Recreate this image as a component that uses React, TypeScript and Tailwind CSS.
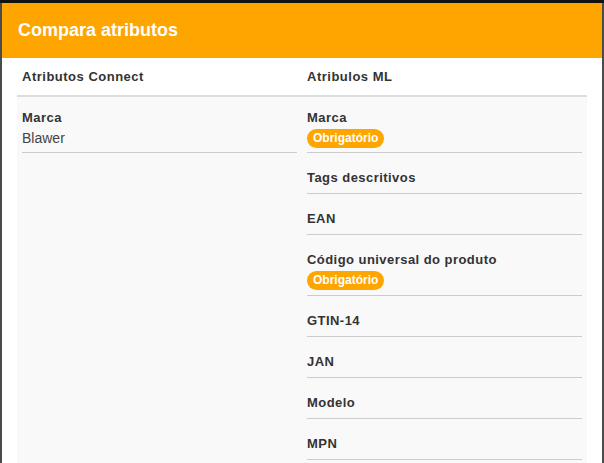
import React from 'react';

type MlAttr = { name: string; required?: boolean };

const mlAttrs: MlAttr[] = [
  { name: 'Marca', required: true },
  { name: 'Tags descritivos' },
  { name: 'EAN' },
  { name: 'Código universal do produto', required: true },
  { name: 'GTIN-14' },
  { name: 'JAN' },
  { name: 'Modelo' },
  { name: 'MPN' },
];

const Badge = () => (
  <span className="inline-block rounded-full bg-[#ffa500] px-[6px] text-[12px] font-bold leading-[19px] text-white">
    Obrigatório
  </span>
);

const App: React.FC = () => {
  return (
    <div
      className="h-[463px] w-[604px] overflow-hidden border-t-[3px] border-[#111] bg-[#4b4b4b] px-[2px]"
      style={{ fontFamily: '"Liberation Sans", Arial, sans-serif' }}
    >
      <div className="h-full w-[600px] bg-white">
        <div className="flex h-[55px] items-center bg-[#ffa500] px-4">
          <h1 className="text-[18px] font-bold text-white">Compara atributos</h1>
        </div>

        <div className="mx-[15px] text-[13px] text-[#333]">
          <div className="grid h-[39px] grid-cols-2 border-b-2 border-[#ddd] font-bold">
            <div className="flex items-center px-[5px] tracking-[0.5px]">Atributos Connect</div>
            <div className="flex items-center px-[5px] tracking-[0.5px]">Atribulos ML</div>
          </div>

          <div className="grid h-[400px] grid-cols-2 bg-[#f9f9f9]">
            <div className="px-[5px]">
              <div className="border-b border-[#ccc] pt-[11px] pb-[4px]">
                <div className="font-bold leading-[20px] tracking-[0.45px]">Marca</div>
                <div className="text-[14px] leading-[20px] text-[#444]">Blawer</div>
              </div>
            </div>

            <div className="px-[5px]">
              {mlAttrs.map((attr, i) => (
                <div
                  key={attr.name}
                  className={`border-b border-[#ccc] ${i === 0 ? 'pt-[11px] pb-[4px]' : 'pt-[15px] pb-[5px]'}`}
                >
                  <div className="font-bold leading-[20px] tracking-[0.45px]">{attr.name}</div>
                  {attr.required && <Badge />}
                </div>
              ))}
            </div>
          </div>
        </div>
      </div>
    </div>
  );
};

export default App;
